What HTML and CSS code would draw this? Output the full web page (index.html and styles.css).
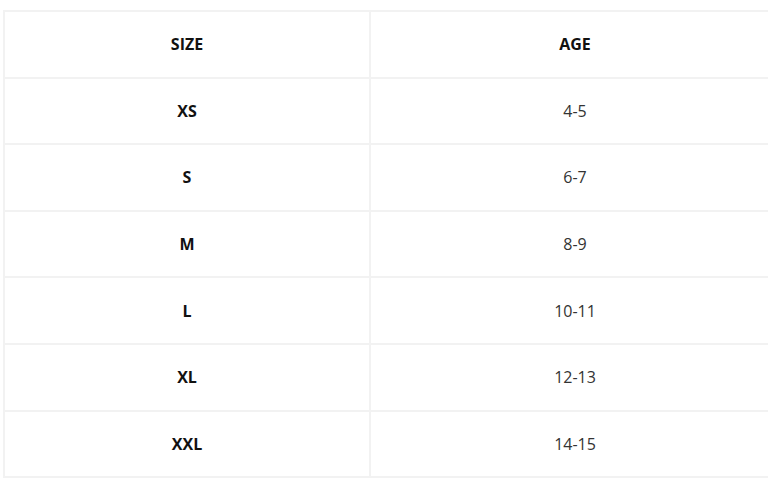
FILE: index.html
```html
<!DOCTYPE html>
<html>
<head>
<meta charset="utf-8">
<link rel="stylesheet" href="styles.css">
</head>
<body>
<table class="size-table">
  <thead>
    <tr><th class="col-size">SIZE</th><th class="col-age">AGE</th></tr>
  </thead>
  <tbody>
    <tr><td class="size">XS</td><td class="age">4-5</td></tr>
    <tr><td class="size">S</td><td class="age">6-7</td></tr>
    <tr><td class="size">M</td><td class="age">8-9</td></tr>
    <tr><td class="size">L</td><td class="age">10-11</td></tr>
    <tr><td class="size">XL</td><td class="age">12-13</td></tr>
    <tr><td class="size">XXL</td><td class="age">14-15</td></tr>
  </tbody>
</table>
</body>
</html>
```
FILE: styles.css
```css
html, body {
  margin: 0;
  padding: 0;
  background: #ffffff;
  overflow: hidden;
}
body {
  padding: 10px 0 0 3px;
  font-family: "Open Sans", "Liberation Sans", sans-serif;
}
.size-table {
  border-collapse: collapse;
  width: 778px;
  table-layout: fixed;
}
.size-table th,
.size-table td {
  border: 2px solid #f2f2f2;
  height: 64.6px;
  padding: 0;
  text-align: center;
  vertical-align: middle;
  font-size: 16px;
}
.col-size { width: 364px; }
.size-table th {
  font-weight: 700;
  color: #111;
}
.size {
  font-weight: 700;
  color: #111;
}
.age {
  font-weight: 400;
  color: #333;
}
```
